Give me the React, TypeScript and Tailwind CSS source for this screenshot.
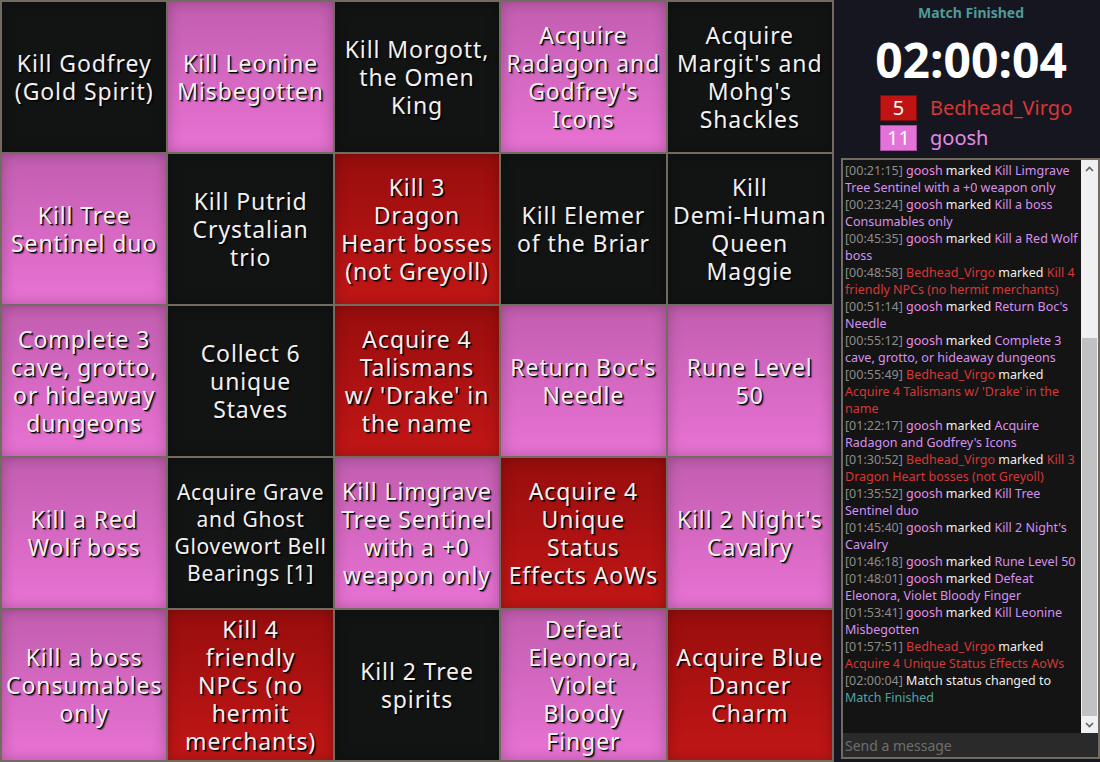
import React from "react";

type Color = "black" | "pink" | "red";

const BOARD: { lines: string[]; color: Color; small?: boolean }[] = [
  { lines: ["Kill Godfrey", "(Gold Spirit)"], color: "black" },
  { lines: ["Kill Leonine", "Misbegotten"], color: "pink" },
  { lines: ["Kill Morgott,", "the Omen", "King"], color: "black" },
  { lines: ["Acquire", "Radagon and", "Godfrey's", "Icons"], color: "pink" },
  { lines: ["Acquire", "Margit's and", "Mohg's", "Shackles"], color: "black" },

  { lines: ["Kill Tree", "Sentinel duo"], color: "pink" },
  { lines: ["Kill Putrid", "Crystalian", "trio"], color: "black" },
  { lines: ["Kill 3", "Dragon", "Heart bosses", "(not Greyoll)"], color: "red" },
  { lines: ["Kill Elemer", "of the Briar"], color: "black" },
  { lines: ["Kill", "Demi-Human", "Queen", "Maggie"], color: "black" },

  { lines: ["Complete 3", "cave, grotto,", "or hideaway", "dungeons"], color: "pink" },
  { lines: ["Collect 6", "unique", "Staves"], color: "black" },
  { lines: ["Acquire 4", "Talismans", "w/ 'Drake' in", "the name"], color: "red" },
  { lines: ["Return Boc's", "Needle"], color: "pink" },
  { lines: ["Rune Level", "50"], color: "pink" },

  { lines: ["Kill a Red", "Wolf boss"], color: "pink" },
  { lines: ["Acquire Grave", "and Ghost", "Glovewort Bell", "Bearings [1]"], color: "black", small: true },
  { lines: ["Kill Limgrave", "Tree Sentinel", "with a +0", "weapon only"], color: "pink" },
  { lines: ["Acquire 4", "Unique", "Status", "Effects AoWs"], color: "red" },
  { lines: ["Kill 2 Night's", "Cavalry"], color: "pink" },

  { lines: ["Kill a boss", "Consumables", "only"], color: "pink" },
  { lines: ["Kill 4", "friendly", "NPCs (no", "hermit", "merchants)"], color: "red" },
  { lines: ["Kill 2 Tree", "spirits"], color: "black" },
  { lines: ["Defeat", "Eleonora,", "Violet", "Bloody", "Finger"], color: "pink" },
  { lines: ["Acquire Blue", "Dancer", "Charm"], color: "red" },
];

const CELL_BG: Record<Color, string> = {
  black: "bg-[#121414]",
  pink: "bg-linear-to-b from-[#c25eb0] to-[#e872d3]",
  red: "bg-linear-to-b from-[#980d0d] to-[#c21616]",
};

// t = timestamp, g = goosh, b = bedhead, w = white, p = goosh item, r = bedhead item, m = teal
type Seg = [string, "t" | "g" | "b" | "w" | "p" | "r" | "m"];

const SEG_COLOR = {
  t: "text-[#8c8c8c]",
  g: "text-[#e88ae6]",
  b: "text-[#d93636]",
  w: "text-[#eeeeee]",
  p: "text-[#d690f0]",
  r: "text-[#d63838]",
  m: "text-[#4fa6a0]",
};

const LOG: Seg[][] = [
  [["[00:21:15] ", "t"], ["goosh", "g"], [" marked ", "w"], ["Kill Limgrave", "p"]],
  [["Tree Sentinel with a +0 weapon only", "p"]],
  [["[00:23:24] ", "t"], ["goosh", "g"], [" marked ", "w"], ["Kill a boss", "p"]],
  [["Consumables only", "p"]],
  [["[00:45:35] ", "t"], ["goosh", "g"], [" marked ", "w"], ["Kill a Red Wolf", "p"]],
  [["boss", "p"]],
  [["[00:48:58] ", "t"], ["Bedhead_Virgo", "b"], [" marked ", "w"], ["Kill 4", "r"]],
  [["friendly NPCs (no hermit merchants)", "r"]],
  [["[00:51:14] ", "t"], ["goosh", "g"], [" marked ", "w"], ["Return Boc's", "p"]],
  [["Needle", "p"]],
  [["[00:55:12] ", "t"], ["goosh", "g"], [" marked ", "w"], ["Complete 3", "p"]],
  [["cave, grotto, or hideaway dungeons", "p"]],
  [["[00:55:49] ", "t"], ["Bedhead_Virgo", "b"], [" marked", "w"]],
  [["Acquire 4 Talismans w/ 'Drake' in the", "r"]],
  [["name", "r"]],
  [["[01:22:17] ", "t"], ["goosh", "g"], [" marked ", "w"], ["Acquire", "p"]],
  [["Radagon and Godfrey's Icons", "p"]],
  [["[01:30:52] ", "t"], ["Bedhead_Virgo", "b"], [" marked ", "w"], ["Kill 3", "r"]],
  [["Dragon Heart bosses (not Greyoll)", "r"]],
  [["[01:35:52] ", "t"], ["goosh", "g"], [" marked ", "w"], ["Kill Tree", "p"]],
  [["Sentinel duo", "p"]],
  [["[01:45:40] ", "t"], ["goosh", "g"], [" marked ", "w"], ["Kill 2 Night's", "p"]],
  [["Cavalry", "p"]],
  [["[01:46:18] ", "t"], ["goosh", "g"], [" marked ", "w"], ["Rune Level 50", "p"]],
  [["[01:48:01] ", "t"], ["goosh", "g"], [" marked ", "w"], ["Defeat", "p"]],
  [["Eleonora, Violet Bloody Finger", "p"]],
  [["[01:53:41] ", "t"], ["goosh", "g"], [" marked ", "w"], ["Kill Leonine", "p"]],
  [["Misbegotten", "p"]],
  [["[01:57:51] ", "t"], ["Bedhead_Virgo", "b"], [" marked", "w"]],
  [["Acquire 4 Unique Status Effects AoWs", "r"]],
  [["[02:00:04] ", "t"], ["Match status changed to", "w"]],
  [["Match Finished", "m"]],
];

function Cell({ lines, color, small }: { lines: string[]; color: Color; small?: boolean }) {
  const size = small
    ? "text-[21px] leading-[27px] tracking-[0.7px]"
    : "text-[23px] leading-[28px] tracking-[0.9px]";
  return (
    <div
      className={`flex flex-col items-center justify-center text-center text-[#f2f0f0] [text-shadow:1px_1px_0_#000,2px_2px_1px_rgba(0,0,0,0.5)] shadow-[inset_0_0_14px_rgba(0,0,0,0.25)] ${size} ${CELL_BG[color]}`}
    >
      {lines.map((l, i) => (
        <div key={i} className="whitespace-nowrap">
          {l}
        </div>
      ))}
    </div>
  );
}

function ScoreRow({ score, name, pink }: { score: number; name: string; pink?: boolean }) {
  return (
    <div className="flex items-center gap-[13px]">
      <div
        className={`w-[37px] h-[26px] flex items-center justify-center text-[20px] leading-none text-white border ${
          pink ? "bg-[#e373d8] border-[#a94f9f]" : "bg-[#c01414] border-[#7d0c0c]"
        }`}
      >
        {score}
      </div>
      <div className={`text-[20px] leading-[26px] ${pink ? "text-[#e28ae8]" : "text-[#d93636]"}`}>{name}</div>
    </div>
  );
}

export default function App() {
  return (
    <div className="flex w-[1100px] h-[762px] overflow-hidden font-['Noto_Sans',sans-serif]">
      <div className="w-[834px] h-full grid grid-cols-5 grid-rows-5 gap-[2px] p-[2px] bg-[#716c5f]">
        {BOARD.map((c, i) => (
          <Cell key={i} lines={c.lines} color={c.color} small={c.small} />
        ))}
      </div>

      <div className="flex-1 flex flex-col bg-[#161620]">
        <div className="flex flex-col items-center pt-[3px] pl-[8px]">
          <div className="text-[14px] leading-[20px] font-bold text-[#4e9b99]">Match Finished</div>
          <div className="mt-[6px] text-[48px] leading-[62px] font-bold text-white">02:00:04</div>
        </div>
        <div className="flex flex-col gap-[4px] pl-[46px] mt-[4px]">
          <ScoreRow score={5} name="Bedhead_Virgo" />
          <ScoreRow score={11} name="goosh" pink />
        </div>

        <div className="flex-1 ml-[7px] mt-[7px] mb-[3px] border-2 border-[#716c5f] bg-[#141414] flex flex-col min-h-0">
          <div className="flex-1 flex min-h-0">
            <div className="flex-1 pl-[2px] pt-[2px] text-[12.5px] leading-[17px] overflow-hidden">
              {LOG.map((line, i) => (
                <div key={i} className="whitespace-nowrap">
                  {line.map(([text, c], j) => (
                    <span key={j} className={SEG_COLOR[c]}>
                      {text}
                    </span>
                  ))}
                </div>
              ))}
            </div>
            <div className="w-[17px] flex flex-col bg-[#f0f0f0]">
              <div className="h-[17px] flex items-center justify-center">
                <svg width="9" height="6" viewBox="0 0 9 6">
                  <path d="M1 5 L4.5 1.5 L8 5" fill="none" stroke="#606060" strokeWidth="1.6" />
                </svg>
              </div>
              <div className="flex-1 flex flex-col px-[1px]">
                <div className="h-[161px]" />
                <div className="flex-1 bg-[#c1c1c1]" />
              </div>
              <div className="h-[17px] flex items-center justify-center">
                <svg width="9" height="6" viewBox="0 0 9 6">
                  <path d="M1 1 L4.5 4.5 L8 1" fill="none" stroke="#606060" strokeWidth="1.6" />
                </svg>
              </div>
            </div>
          </div>
          <div className="h-[24px] bg-[#2a2a2a] flex items-center pl-[2px] text-[14px] text-[#6e6e6e]">
            Send a message
          </div>
        </div>
      </div>
    </div>
  );
}
